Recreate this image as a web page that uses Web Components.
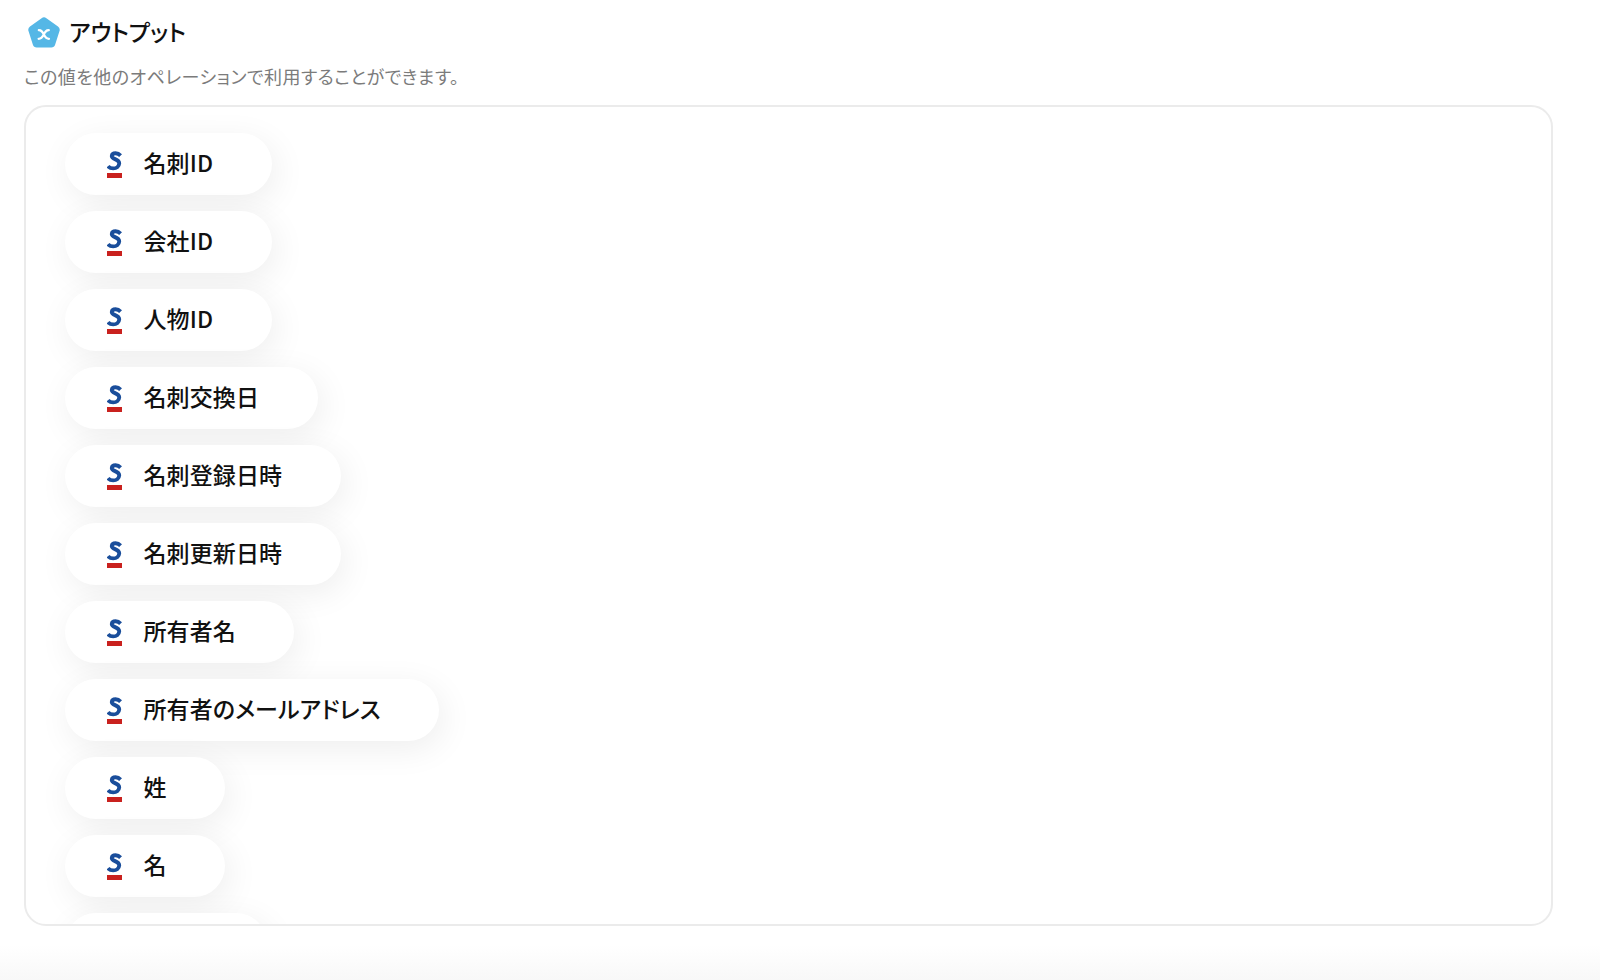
<!DOCTYPE html>
<html lang="ja">
<head>
<meta charset="utf-8">
<title>アウトプット</title>
<style>
  html, body { margin: 0; background: #fff; }
  body { font-family: "Noto Sans CJK JP", "Noto Sans", sans-serif; }
</style>
</head>
<body>
<output-page>
  <output-heading>アウトプット</output-heading>
  <output-note>この値を他のオペレーションで利用することができます。</output-note>
  <output-box>
    <output-pill>名刺ID</output-pill>
    <output-pill>会社ID</output-pill>
    <output-pill>人物ID</output-pill>
    <output-pill>名刺交換日</output-pill>
    <output-pill>名刺登録日時</output-pill>
    <output-pill>名刺更新日時</output-pill>
    <output-pill>所有者名</output-pill>
    <output-pill>所有者のメールアドレス</output-pill>
    <output-pill>姓</output-pill>
    <output-pill>名</output-pill>
    <output-pill empty></output-pill>
  </output-box>
</output-page>

<script>
class OutputPage extends HTMLElement {
  constructor() {
    super();
    this.attachShadow({ mode: "open" }).innerHTML = `
      <style>
        :host {
          display: block;
          box-sizing: border-box;
          height: 980px;
          padding: 17px 47px 0 24px;
          overflow: hidden;
          background: linear-gradient(#fff 0, #fff 945px, #f8f8f8 980px);
          font-feature-settings: "palt";
        }
      </style>
      <slot></slot>
    `;
  }
}

class OutputHeading extends HTMLElement {
  constructor() {
    super();
    this.attachShadow({ mode: "open" }).innerHTML = `
      <style>
        :host {
          display: flex;
          align-items: center;
          gap: 8px;
          box-sizing: border-box;
          height: 32px;
          padding: 0 0 5px 3px;
          color: #111;
          font-size: 23px;
          font-weight: 500;
        }
        svg { flex: none; display: block; margin-top: 5px; }
      </style>
      <svg width="34" height="32" viewBox="0 0 34 32" aria-hidden="true" focusable="false">
        <path d="M14.600 1.200a4 4 0 0 1 4.800 0l11.600 8.400a4 4 0 0 1 1.500 4.500l-4.400 13.600a4 4 0 0 1-3.800 2.800H9.700a4 4 0 0 1-3.800-2.800L1.500 14.100A4 4 0 0 1 3 9.600z" fill="#55b7e6"/>
        <path d="M11.800 13.200c2.800 0 3.500 1.300 5 4.300 1.500 3 2.400 4.300 5.200 4.300M21.800 13.200c-2.800 0-3.500 1.300-5 4.300-1.500 3-2.400 4.300-5.200 4.300" fill="none" stroke="#fff" stroke-width="2.200" stroke-linecap="round"/>
      </svg>
      <slot></slot>
    `;
  }
}

class OutputNote extends HTMLElement {
  constructor() {
    super();
    this.attachShadow({ mode: "open" }).innerHTML = `
      <style>
        :host {
          display: block;
          margin-top: 15px;
          height: 25px;
          line-height: 25px;
          color: #7b7b7b;
          font-size: 18px;
          letter-spacing: .45px;
        }
      </style>
      <slot></slot>
    `;
  }
}

class OutputBox extends HTMLElement {
  constructor() {
    super();
    this.attachShadow({ mode: "open" }).innerHTML = `
      <style>
        :host {
          display: flex;
          flex-direction: column;
          align-items: flex-start;
          gap: 16px;
          box-sizing: border-box;
          height: 821px;
          margin-top: 16px;
          padding: 26px 39px;
          overflow: hidden;
          border: 2px solid #ebebeb;
          border-radius: 22px;
          background: #fff;
        }
      </style>
      <slot></slot>
    `;
  }
}

class OutputPill extends HTMLElement {
  constructor() {
    super();
    this.attachShadow({ mode: "open" }).innerHTML = `
      <style>
        :host {
          display: flex;
          flex: none;
          align-items: center;
          gap: 21.5px;
          box-sizing: border-box;
          height: 62px;
          padding: 0 58.5px 4px 42px;
          border-radius: 31px;
          background: #fff;
          box-shadow: 4px 8px 34px rgba(0, 0, 0, .07);
          color: #111;
          font-size: 23px;
          font-weight: 500;
          letter-spacing: .1px;
        }
        :host([empty]) { width: 202px; }
        svg { flex: none; display: block; margin-top: 4px; }
      </style>
      <svg width="15" height="27" viewBox="0 0 15 27" aria-hidden="true" focusable="false">
        <path d="M13.600 4.600C12.200 3.100 10.400 2.300 8.600 2.300 6.200 2.300 4.900 3.500 4.800 5.100c-.2 3.500 7.700 2.500 7.400 7.400-.2 2.900-2.600 4.900-6 4.900-2.200 0-4-.8-5.200-2.300" fill="none" stroke="#1a4e9b" stroke-width="3.900"/>
        <rect x="0" y="22" width="15" height="5" fill="#c9211e"/>
      </svg>
      <slot></slot>
    `;
  }
}

customElements.define("output-page", OutputPage);
customElements.define("output-heading", OutputHeading);
customElements.define("output-note", OutputNote);
customElements.define("output-box", OutputBox);
customElements.define("output-pill", OutputPill);
</script>
</body>
</html>
